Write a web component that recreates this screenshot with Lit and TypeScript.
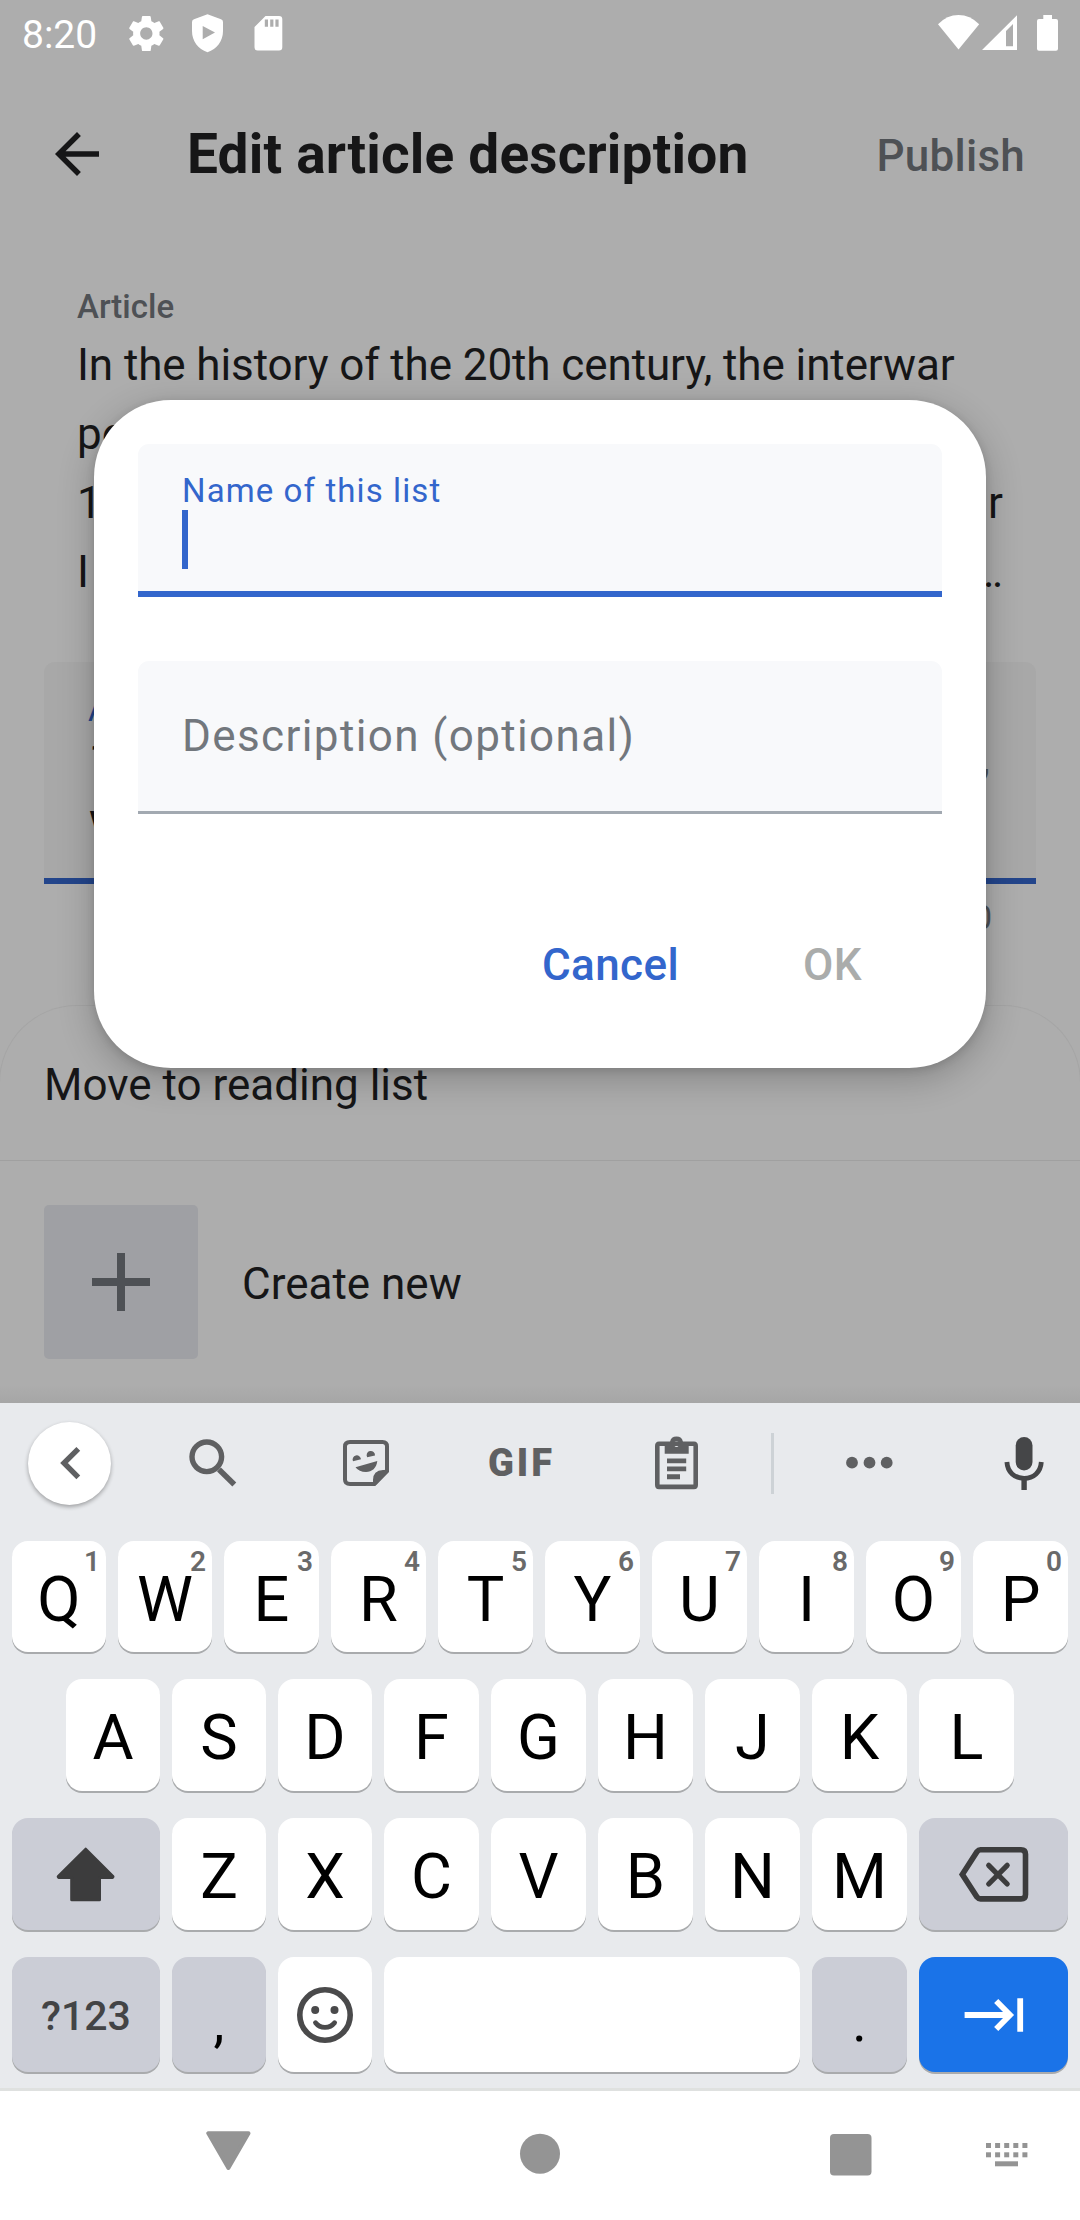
import { LitElement, html, css, svg, nothing } from "lit";
import type { TemplateResult } from "lit";
import { customElement, property } from "lit/decorators.js";

const icon = (box: string, body: TemplateResult, cls = "") => {
  const [, , w, h] = box.split(" ");
  return html`<svg class=${cls} viewBox=${box} width=${w} height=${h} aria-hidden="true">${body}</svg>`;
};

const gear = icon("125 12 42 42", svg`<path transform="translate(125.2 12.4) scale(1.76)" fill="#fff" d="M19.43 12.98c.04-.32.07-.64.07-.98s-.03-.66-.07-.98l2.11-1.65c.19-.15.24-.42.12-.64l-2-3.46c-.12-.22-.39-.3-.61-.22l-2.49 1c-.52-.4-1.08-.73-1.69-.98l-.38-2.65C14.46 2.18 14.25 2 14 2h-4c-.25 0-.46.18-.49.42l-.38 2.65c-.61.25-1.17.59-1.69.98l-2.49-1c-.23-.09-.49 0-.61.22l-2 3.46c-.13.22-.07.49.12.64l2.11 1.65c-.04.32-.07.65-.07.98s.03.66.07.98l-2.11 1.65c-.19.15-.24.42-.12.64l2 3.46c.12.22.39.3.61.22l2.49-1c.52.4 1.08.73 1.69.98l.38 2.65c.03.24.24.42.49.42h4c.25 0 .46-.18.49-.42l.38-2.65c.61-.25 1.17-.59 1.69-.98l2.49 1c.23.09.49 0 .61-.22l2-3.46c.12-.22.07-.49-.12-.64l-2.11-1.65zM12 15.5c-1.93 0-3.5-1.57-3.5-3.5s1.57-3.5 3.5-3.5 3.5 1.57 3.5 3.5-1.57 3.5-3.5 3.5z"/>`);
const shield = icon("192 12 31 42", svg`<path fill="#fff" fill-rule="evenodd" d="M207.5 14.2 221 19.2Q223 20 223 22V31C223 41 217 49 207.5 52.3C198 49 192 41 192 31V22Q192 20 194 19.2ZM202.7 26V39.3L215 32.6Z"/>`);
const sdCard = icon("254 12 29 42", svg`<path fill="#fff" fill-rule="evenodd" d="M265.5 16H279Q282.3 16 282.3 19.3V47.3Q282.3 50.5 279 50.5H257.7Q254.5 50.5 254.5 47.3V27ZM264.8 19.5V26.7H268V19.5ZM270.2 19.5V26.7H273.4V19.5ZM275.4 19.5V26.7H278.6V19.5Z"/>`);
const wifi = icon("938 12 42 42", svg`<path fill="#fff" d="M938 24.2Q947 15 958.5 15T979.2 24.2L958.5 49.5Z"/>`);
const signal = icon("982 12 36 42", svg`<path fill="#fff" fill-rule="evenodd" d="M982 50 1017 15.2V50ZM1006 31V46.3H1013V24Z"/>`);
const battery = icon("1037 12 21 42", svg`<path fill="#fff" d="M1043.3 15H1052V19H1056Q1058 19 1058 21V48.8Q1058 50.8 1056 50.8H1039Q1037 50.8 1037 48.8V21Q1037 19 1039 19H1043.3Z"/>`);
const back = html`<svg viewBox="0 0 24 24" width="66" height="66"><path fill="#161617" d="M20 11H7.83l5.59-5.59L12 4l-8 8 8 8 1.41-1.41L7.83 13H20v-2z"/></svg>`;
const plus = icon("92 1253 58 58", svg`<path stroke="#4e5155" stroke-width="8" d="M121 1253V1311M92 1282H150"/>`);

const chevron = icon("58 1445 24 36", svg`<path fill="none" stroke="#5f6062" stroke-width="5.4" d="M78.3 1448.8 64 1463 78.3 1477.3"/>`);
const search = icon("188 1440 50 50", svg`<g fill="none" stroke="#5f6062"><circle cx="206.8" cy="1458.8" r="14.8" stroke-width="5.4"/><path stroke-width="5.6" d="M219 1471.5 234.3 1486.5"/></g>`);
const sticker = icon("343 1440 47 47", svg`<path fill="none" stroke="#5f6062" stroke-width="4" d="M350 1442H382.500Q387 1442 387 1446.500V1470.500L374 1484H350Q345 1484 345 1479.500V1446.500Q345 1442 350 1442Z"/><path fill="#5f6062" d="M389 1470H383Q373 1470.500 373 1480V1485.800H375.500L389 1472ZM353 1461.300A4.200 4.200 0 1 1 361 1459.300ZM367.200 1457.300A4.200 4.200 0 1 1 375 1455.500ZM355.500 1467.200 377.300 1461C376.500 1468 372 1472 366 1472Q359 1472 355.500 1467.200Z"/>`);
const clipboard = icon("655 1436 43 54", svg`<path fill="none" stroke="#5f6062" stroke-width="4.600" d="M659 1443.800H694Q695.700 1443.800 695.700 1446V1485Q695.700 1486.900 694 1486.900H659Q657.300 1486.900 657.300 1485V1446Q657.300 1443.800 659 1443.800Z"/><path fill="#5f6062" fill-rule="evenodd" d="M664.700 1442H670A6.600 6.600 0 0 1 683 1442H688.700V1453.700H664.700ZM676.500 1441.300A2.600 2.800 0 1 0 676.500 1446.900A2.600 2.800 0 1 0 676.500 1441.300Z"/><path fill="#5f6062" d="M667 1458.500H686.200V1463.200H667ZM667 1466.500H686.200V1471.200H667ZM667 1474.300H680V1479.300H667Z"/>`);
const dots = icon("846 1457 47 14", svg`<g fill="#5f6062"><circle cx="852" cy="1463.700" r="5.900"/><circle cx="869.500" cy="1463.700" r="5.900"/><circle cx="886.700" cy="1463.700" r="5.900"/></g>`);
const mic = icon("1004 1435 40 55", svg`<rect x="1015.700" y="1436" width="16.800" height="33.500" rx="8.400" fill="#454648"/><path fill="none" stroke="#454648" stroke-width="4.800" d="M1006.900 1461C1007.500 1471 1014.500 1477.300 1024.100 1477.300S1040.700 1471 1041.300 1461"/><path stroke="#454648" stroke-width="5.400" d="M1024.100 1477V1489"/>`);

const shift = icon("56 1845 60 56", svg`<path fill="#3c3c3d" stroke="#3c3c3d" stroke-width="3" stroke-linejoin="round" d="M85.700 1848.200 113 1875.600 112.500 1876.400H99.500V1898.700H71.700V1876.400H58.700L58.200 1875.600Z"/>`);
const backspace = icon("956 1847 74 59", svg`<g fill="none" stroke="#3c3c3d" stroke-width="5.600"><path stroke-linejoin="miter" d="M979.500 1851.800H1020Q1024.500 1851.800 1024.500 1856.300V1896.400Q1024.500 1900.900 1020 1900.900H979.500Q977.500 1900.900 976 1899L961.300 1876.400 976 1853.700Q977.500 1851.800 979.500 1851.800Z"/><path stroke-width="5.200" stroke-linecap="round" d="M987.700 1867.300 1006.200 1886M1006.200 1867.300 987.700 1886"/></g>`);
const smiley = icon("296 1985 58 58", svg`<circle cx="325" cy="2014" r="25.200" fill="none" stroke="#4a4a4b" stroke-width="5.600"/><circle cx="315.200" cy="2009" r="4" fill="#4a4a4b"/><circle cx="334.500" cy="2009" r="4" fill="#4a4a4b"/><path fill="none" stroke="#4a4a4b" stroke-width="4.800" stroke-linecap="round" d="M315.500 2021.700Q319 2026.300 325 2026.300T334.600 2021.700"/>`);
const next = icon("962 1995 62 38", svg`<path fill="none" stroke="#fff" stroke-width="5.800" d="M963.600 2014H1009M995.200 2000 1009 2014 995.200 2028M1019.200 1997.300V2030.700"/>`);

const navBack = icon("206 2131 45 45", svg`<path fill="#949494" stroke="#949494" stroke-width="4" stroke-linejoin="round" d="M208.300 2133.300H248.500L228.400 2168Z"/>`);
const navHome = icon("519 2131 42 45", svg`<circle cx="540" cy="2153.700" r="20" fill="#949494"/>`);
const navRecent = icon("830 2131 42 45", svg`<rect x="830" y="2134" width="41.500" height="41.500" rx="4" fill="#949494"/>`);
const navIme = icon("986 2131 42 45", svg`<g fill="#949494">${[2143, 2152.3].map((y) => [0, 1, 2, 3, 4].map((i) => svg`<rect x=${986 + i * 9.1} y=${y} width="5" height="5"/>`))}<rect x="995" y="2161.300" width="23" height="5"/></g>`);

@customElement("key-cap")
class KeyCap extends LitElement {
  @property() label = "";
  @property() hint = "";
  @property({ reflect: true }) kind = "letter";

  static styles = css`
    :host {
      display: grid;
      grid-template: 100% / 100%;
      background: #fff;
      border-radius: 16px;
      box-shadow: 0 2px 0 #a9abad;
      font: 400 63px/1 Roboto, sans-serif;
      color: #000;
      min-width: 0;
    }
    :host([kind="tone"]),
    :host([kind="symbol"]),
    :host([kind="mark"]) { background: #cbcdd6; }
    :host([kind="enter"]) { background: #1a73e8; }
    .face {
      grid-area: 1 / 1;
      display: flex;
      align-items: center;
      justify-content: center;
      padding-top: 5px;
    }
    .face.art { padding-top: 0; }
    :host([kind="symbol"]) .face { font-size: 41px; font-weight: 500; color: #434446; padding-top: 3px; }
    :host([kind="mark"]) .face { font-size: 55px; padding-top: 16px; }
    .hint {
      grid-area: 1 / 1;
      justify-self: end;
      padding: 6px 6px 0 0;
      font-size: 28px;
      line-height: 29px;
      font-weight: 600;
      color: #6a6a6a;
    }
  `;

  render() {
    return html`
      <span class="face ${this.label ? "" : "art"}">${this.label || html`<slot></slot>`}</span>
      ${this.hint ? html`<span class="hint">${this.hint}</span>` : nothing}
    `;
  }
}

@customElement("soft-keyboard")
class SoftKeyboard extends LitElement {
  static styles = css`
    :host {
      display: block;
      height: 685px;
      background: #e8eaed;
      border-bottom: 3px solid #dfe1e0;
    }
    svg { display: block; }
    .tools {
      display: grid;
      grid-template-columns: 139px 147px 160px 148px 165px 27px 166px 128px;
      height: 120px;
      align-items: center;
      justify-items: center;
      margin-bottom: 18px;
    }
    .round {
      display: grid;
      place-items: center;
      width: 83px;
      height: 83px;
      border-radius: 50%;
      background: #fff;
      box-shadow: 0 2px 4px rgba(0, 0, 0, 0.32);
    }
    .gif { font: 900 38px/1 Roboto, sans-serif; color: #5f6062; letter-spacing: 3px; padding-left: 3px; }
    .rule { width: 3px; height: 61px; background: #cdd2d6; }
    .mic { justify-self: start; padding-left: 52px; }
    .row {
      display: grid;
      gap: 12px;
      padding: 0 12px;
      height: 112px;
      margin-bottom: 27px;
    }
    .row.ten { grid-template-columns: 94px 94px repeat(8, 95px); height: 111px; }
    .row.nine { grid-template-columns: repeat(3, 94px) repeat(6, 95px); padding: 0 66px; }
    .row.shifted { grid-template-columns: 148px 94px 94px repeat(5, 95px) 149px; }
    .row.bottom {
      grid-template-columns: 148px 94px 94px minmax(0, 1fr) 95px 149px;
      height: 115px;
      margin-bottom: 0;
    }
  `;

  render() {
    return html`
      <div class="tools">
        <span class="round">${chevron}</span>
        ${search}${sticker}
        <span class="gif">GIF</span>
        ${clipboard}
        <span class="rule"></span>
        ${dots}
        <span class="mic">${mic}</span>
      </div>
      <div class="row ten">
        ${[..."QWERTYUIOP"].map((k, i) => html`<key-cap label=${k} hint=${(i + 1) % 10}></key-cap>`)}
      </div>
      <div class="row nine">${[..."ASDFGHJKL"].map((k) => html`<key-cap label=${k}></key-cap>`)}</div>
      <div class="row shifted">
        <key-cap kind="tone">${shift}</key-cap>
        ${[..."ZXCVBNM"].map((k) => html`<key-cap label=${k}></key-cap>`)}
        <key-cap kind="tone">${backspace}</key-cap>
      </div>
      <div class="row bottom">
        <key-cap kind="symbol" label="?123"></key-cap>
        <key-cap kind="mark" label=","></key-cap>
        <key-cap>${smiley}</key-cap>
        <key-cap></key-cap>
        <key-cap kind="mark" label="."></key-cap>
        <key-cap kind="enter">${next}</key-cap>
      </div>
    `;
  }
}

@customElement("list-dialog")
class ListDialog extends LitElement {
  static styles = css`
    :host {
      display: block;
      box-sizing: border-box;
      padding: 44px;
      background: #fff;
      border-radius: 77px;
      box-shadow: 0 10px 36px rgba(0, 0, 0, 0.24), 0 2px 8px rgba(0, 0, 0, 0.12);
      font-family: Roboto, sans-serif;
    }
    .field {
      box-sizing: border-box;
      height: 153px;
      padding: 0 44px;
      background: #f8f9fb;
      border-radius: 11px 11px 0 0;
      margin-bottom: 64px;
    }
    .active { border-bottom: 6px solid #36c; padding-top: 27px; }
    .idle { border-bottom: 3px solid #a2a9b1; }
    .label { color: #36c; font-size: 33px; line-height: 39px; letter-spacing: 1.1px; }
    .caret { width: 6px; height: 59px; background: #36c; }
    .placeholder { color: #72777d; font-size: 44px; line-height: 150px; letter-spacing: 1.38px; }
    .actions {
      display: flex;
      justify-content: flex-end;
      gap: 124px;
      padding: 54px 80px 0 0;
      font-size: 44px;
      line-height: 66px;
      font-weight: 500;
      color: #36c;
      letter-spacing: 0.4px;
    }
    .off { color: #aaacab; }
  `;

  render() {
    return html`
      <div class="field active">
        <div class="label">Name of this list</div>
        <div class="caret"></div>
      </div>
      <div class="field idle"><div class="placeholder">Description (optional)</div></div>
      <div class="actions"><span>Cancel</span><span class="off">OK</span></div>
    `;
  }
}

@customElement("app-root")
class AppRoot extends LitElement {
  static styles = css`
    :host {
      display: block;
      position: relative;
      width: 1080px;
      height: 2220px;
      overflow: hidden;
      background: #fff;
      font-family: Roboto, sans-serif;
      color: #161617;
    }
    svg { display: block; }
    .page {
      display: flex;
      flex-direction: column;
      height: 1403px;
      background: linear-gradient(#adadad 1385px, #a6a6a6 1403px);
    }
    .status {
      display: flex;
      align-items: flex-start;
      height: 66px;
      padding: 12px 22px 0;
      box-sizing: border-box;
    }
    .clock { width: 103px; font-size: 39px; line-height: 46px; color: #fff; }
    .status .shield { margin-left: 25px; }
    .status .card { margin: 0 auto 0 31px; }
    .status .signal { margin-left: 2px; }
    .status .battery { margin-left: 19px; }
    .bar {
      display: flex;
      align-items: center;
      height: 176px;
      padding: 0 55px 0 44px;
      box-sizing: border-box;
    }
    .title { margin-left: 77px; font-size: 55px; font-weight: 700; line-height: 66px; letter-spacing: 0.18px; }
    .publish { margin-left: auto; padding-top: 3px; font-size: 44px; font-weight: 500; letter-spacing: 0.25px; color: #4e5155; }
    .article { padding: 45px 77px 0; }
    .caption { font-size: 33px; line-height: 39px; font-weight: 500; color: #4e5155; }
    .line {
      display: flex;
      justify-content: space-between;
      white-space: pre;
      font-size: 44px;
      line-height: 69px;
    }
    .line.start { padding-top: 5px; letter-spacing: -0.1px; }
    .edit {
      box-sizing: border-box;
      height: 222px;
      margin: 55px 44px 0;
      padding: 28px 44px 0;
      background: #a8a8a8;
      border-bottom: 6px solid #23458b;
      border-radius: 11px 11px 0 0;
    }
    .edit .label { color: #23458b; font-size: 33px; line-height: 39px; }
    .edit .line { line-height: 61px; padding: 0 2px 0 1px; }
    .tail { color: #4e5155; }
    .count { padding: 14px 88px 0; text-align: right; font-size: 33px; line-height: 40px; color: #4e5155; }
    .sheet {
      box-sizing: border-box;
      height: 398px;
      margin: auto -1px 0;
      border: solid #a5a5a5;
      border-width: 1px 1px 0;
      border-radius: 78px 78px 0 0;
    }
    .sheet h2 {
      margin: 0;
      padding: 49px 44px 45px;
      font-size: 44px;
      font-weight: 400;
      line-height: 60px;
      border-bottom: 1px solid #a0a0a0;
    }
    .create { display: flex; align-items: center; padding: 44px; font-size: 44px; }
    .create .name { padding-top: 4px; }
    .tile {
      display: grid;
      place-items: center;
      width: 154px;
      height: 154px;
      margin-right: 44px;
      border-radius: 5px;
      background: #9fa0a4;
    }
    .nav { display: flex; padding: 40px 0 0 206px; height: 129px; box-sizing: border-box; }
    .nav .home { margin-left: 268px; }
    .nav .recent { margin-left: 269px; }
    .nav .ime { margin-left: 114px; }
    .dialog { position: absolute; left: 94px; top: 400px; width: 892px; height: 668px; }
  `;

  render() {
    return html`
      <div class="page">
        <div class="status">
          <span class="clock">8:20</span>${gear}
          <span class="shield">${shield}</span><span class="card">${sdCard}</span>
          ${wifi}<span class="signal">${signal}</span><span class="battery">${battery}</span>
        </div>
        <div class="bar">
          ${back}
          <span class="title">Edit article description</span>
          <span class="publish">Publish</span>
        </div>
        <div class="article">
          <div class="caption">Article</div>
          <div class="line start">In the history of the 20th century, the interwar</div>
          <div class="line"><span>pe</span></div>
          <div class="line"><span>1</span><span>r</span></div>
          <div class="line"><span>I</span><span>…</span></div>
        </div>
        <div class="edit">
          <div class="label">A</div>
          <div class="line"><span>1</span><span class="tail">,</span></div>
          <div class="line"><span>w</span></div>
        </div>
        <div class="count">0</div>
        <div class="sheet">
          <h2>Move to reading list</h2>
          <div class="create"><span class="tile">${plus}</span><span class="name">Create new</span></div>
        </div>
      </div>
      <soft-keyboard></soft-keyboard>
      <div class="nav">
        ${navBack}<span class="home">${navHome}</span><span class="recent">${navRecent}</span><span class="ime">${navIme}</span>
      </div>
      <list-dialog class="dialog"></list-dialog>
    `;
  }
}
